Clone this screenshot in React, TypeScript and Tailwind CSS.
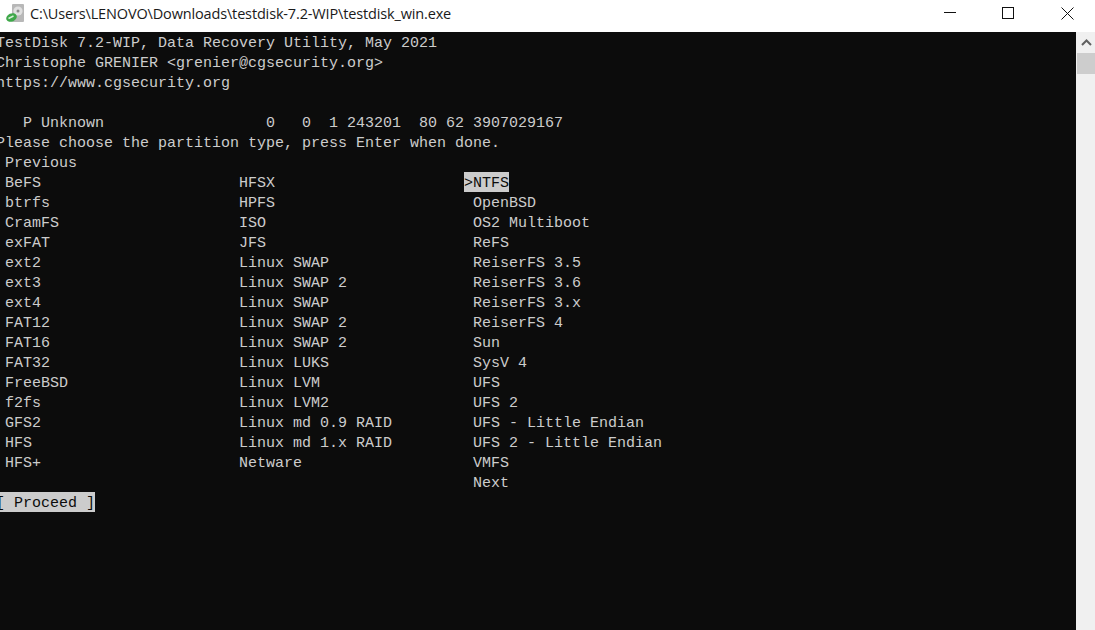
const col1 = ["BeFS","btrfs","CramFS","exFAT","ext2","ext3","ext4","FAT12","FAT16","FAT32","FreeBSD","f2fs","GFS2","HFS","HFS+",""];
const col2 = ["HFSX","HPFS","ISO","JFS","Linux SWAP","Linux SWAP 2","Linux SWAP","Linux SWAP 2","Linux SWAP 2","Linux LUKS","Linux LVM","Linux LVM2","Linux md 0.9 RAID","Linux md 1.x RAID","Netware",""];
const col3 = ["NTFS","OpenBSD","OS2 Multiboot","ReFS","ReiserFS 3.5","ReiserFS 3.6","ReiserFS 3.x","ReiserFS 4","Sun","SysV 4","UFS","UFS 2","UFS - Little Endian","UFS 2 - Little Endian","VMFS","Next"];

function Line({ children }: { children?: React.ReactNode }) {
  return <div className="h-5 leading-6 whitespace-pre">{children || " "}</div>;
}

function Highlight({ children }: { children: React.ReactNode }) {
  return <span className="inline-block h-5 align-top bg-[#cccccc] text-[#0c0c0c]">{children}</span>;
}

export default function App() {
  return (
    <div className="w-[1095px] h-[630px] overflow-hidden flex flex-col bg-white">
      <div className="h-8 shrink-0 flex items-center bg-white">
        <svg className="ml-[5px] mr-[5px] mb-1.5 shrink-0" width="20" height="20" viewBox="0 0 20 20">
          <rect x="7" y="1" width="12" height="18" rx="1" fill="#b8b8b8" />
          <circle cx="13" cy="8" r="4.6" fill="#e0e0e0" />
          <circle cx="13" cy="8" r="1.5" fill="#8a8a8a" />
          <ellipse cx="6.5" cy="14.5" rx="5.5" ry="4" fill="#3fa84a" transform="rotate(-25 6.5 14.5)" />
          <path d="M3.5 15.5 L8.5 13" stroke="#d8f0da" strokeWidth="1.4" />
        </svg>
        <div className="pb-1 text-[14.5px] text-[#1a1a1a] whitespace-pre font-['Open_Sans','Liberation_Sans',sans-serif] tracking-[-0.15px]">
          C:\Users\LENOVO\Downloads\testdisk-7.2-WIP\testdisk_win.exe
        </div>
        <div className="ml-auto flex -mr-px pb-1.5">
          <div className="w-14 h-[26px] flex items-center justify-center">
            <svg width="12" height="12" viewBox="0 0 12 12"><path d="M0 5.5H12" stroke="#111" strokeWidth="1" /></svg>
          </div>
          <div className="w-[60px] h-[26px] flex items-center justify-center">
            <svg width="12" height="12" viewBox="0 0 12 12"><rect x="0.5" y="0.5" width="11" height="11" fill="none" stroke="#111" strokeWidth="1" /></svg>
          </div>
          <div className="w-[58px] h-[26px] flex items-center justify-center">
            <svg width="13" height="13" viewBox="0 0 13 13"><path d="M0.5 0.5L12.5 12.5M12.5 0.5L0.5 12.5" stroke="#111" strokeWidth="1" /></svg>
          </div>
        </div>
      </div>
      <div className="flex-1 flex min-h-0">
        <div className="flex-1 min-w-0 overflow-hidden bg-[#0c0c0c] text-[#cccccc] text-[15px] font-['Liberation_Mono','DejaVu_Sans_Mono',monospace]">
          <div className="-ml-1">
            <Line>TestDisk 7.2-WIP, Data Recovery Utility, May 2021</Line>
            <Line>{"Christophe GRENIER <grenier@cgsecurity.org>"}</Line>
            <Line>https://www.cgsecurity.org</Line>
            <Line />
            <Line>{"   P Unknown                  0   0  1 243201  80 62 3907029167"}</Line>
            <Line>Please choose the partition type, press Enter when done.</Line>
            <Line> Previous</Line>
            {col1.map((a, i) => (
              <Line key={i}>
                {" " + a.padEnd(26) + col2[i].padEnd(25)}
                {i === 0 ? <Highlight>{">NTFS"}</Highlight> : " " + col3[i]}
              </Line>
            ))}
            <Line><Highlight>{"[ Proceed ]"}</Highlight></Line>
          </div>
        </div>
        <div className="w-[19px] shrink-0 bg-[#f0f0f0] flex flex-col pl-px">
          <div className="h-[21px] flex items-center justify-center">
            <svg width="11" height="7" viewBox="0 0 11 7"><path d="M1 6L5.5 1.5L10 6" fill="none" stroke="#606060" strokeWidth="2" /></svg>
          </div>
          <div className="h-[21px] bg-[#cdcdcd]" />
        </div>
      </div>
    </div>
  );
}
